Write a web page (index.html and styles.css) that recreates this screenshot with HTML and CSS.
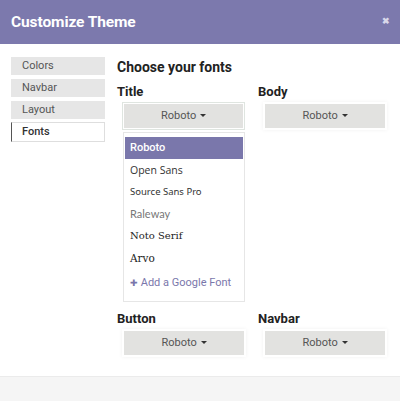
FILE: index.html
```html
<!DOCTYPE html>
<html>
<head>
<meta charset="utf-8">
<link rel="stylesheet" href="styles.css">
</head>
<body>
<div class="modal">
  <header class="head">
    <h1 class="head-title">Customize Theme</h1>
    <span class="close">&#10006;</span>
  </header>
  <main class="main">
    <nav class="side">
      <div class="side-item">Colors</div>
      <div class="side-item">Navbar</div>
      <div class="side-item">Layout</div>
      <div class="side-item side-active">Fonts</div>
    </nav>
    <section class="content">
      <h2 class="heading">Choose your fonts</h2>
      <div class="grid">
        <div class="col">
          <div class="label">Title</div>
          <div class="wrap wrap-focus"><div class="btn">Roboto <span class="caret"></span></div></div>
          <ul class="menu">
            <li class="mi mi-active">Roboto</li>
            <li class="mi f-open">Open Sans</li>
            <li class="mi f-source">Source Sans Pro</li>
            <li class="mi f-raleway">Raleway</li>
            <li class="mi f-noto">Noto Serif</li>
            <li class="mi f-arvo">Arvo</li>
            <li class="mi mi-add"><span class="plus">&#10010;</span> Add a Google Font</li>
          </ul>
        </div>
        <div class="col">
          <div class="label">Body</div>
          <div class="wrap"><div class="btn">Roboto <span class="caret"></span></div></div>
        </div>
        <div class="col">
          <div class="label">Button</div>
          <div class="wrap"><div class="btn">Roboto <span class="caret"></span></div></div>
        </div>
        <div class="col">
          <div class="label">Navbar</div>
          <div class="wrap"><div class="btn">Roboto <span class="caret"></span></div></div>
        </div>
      </div>
    </section>
  </main>
  <footer class="foot"></footer>
</div>
</body>
</html>
```
FILE: styles.css
```css
* { box-sizing: border-box; }
html, body { margin: 0; padding: 0; }
body {
  font-family: Roboto, "Liberation Sans", sans-serif;
  background: #fff;
  width: 400px;
  height: 401px;
  overflow: hidden;
}
.modal {
  display: flex;
  flex-direction: column;
  height: 401px;
}
.head {
  height: 44px;
  background: #7c79ad;
  display: flex;
  align-items: center;
  justify-content: space-between;
  padding: 0 11px;
  flex: none;
}
.head-title {
  margin: 0;
  color: #fff;
  font-size: 15.5px;
  font-weight: 700;
  letter-spacing: -0.1px;
}
.close {
  color: #d9d8ea;
  font-size: 9px;
  font-weight: 700;
  margin-top: -3px;
  margin-right: -1px;
}
.main {
  flex: 1;
  display: flex;
  padding: 13px 0 0 11px;
  gap: 12px;
}
.side {
  width: 94px;
  display: flex;
  flex-direction: column;
  gap: 4px;
  flex: none;
}
.side-item {
  height: 18px;
  background: #e6e6e6;
  color: #555;
  font-size: 11px;
  line-height: 18px;
  padding-left: 11px;
}
.side-active {
  height: 20px;
  margin-top: -1px;
  background: #fff;
  border: 1px solid #dedede;
  border-left-color: #555;
  color: #333;
  font-weight: 500;
  padding-left: 10px;
}
.content { flex: 1; }
.heading {
  margin: 2px 0 0;
  font-size: 14px;
  line-height: 16px;
  font-weight: 700;
  color: #222;
}
.grid {
  display: grid;
  grid-template-columns: 141px 141px;
  row-gap: 9px;
  margin-top: 9px;
}
.label {
  font-size: 13px;
  line-height: 15px;
  font-weight: 700;
  color: #222;
}
.wrap {
  margin: 3px 0 0 5px;
  width: 124px;
  padding: 2px;
  box-shadow: 0 0 4px rgba(0,0,0,0.06);
  background: #fff;
}
.wrap-focus {
  border: 1px solid #dfe5e0;
  padding: 1px;
  box-shadow: none;
  width: 123px;
}
.btn {
  height: 24px;
  background: #e2e2e0;
  color: #555;
  font-size: 11px;
  line-height: 24px;
  text-align: center;
}
.caret {
  display: inline-block;
  width: 0;
  height: 0;
  border-left: 3px solid transparent;
  border-right: 3px solid transparent;
  border-top: 3px solid #333;
  vertical-align: 2px;
  margin-left: 1px;
}
.menu {
  list-style: none;
  margin: 2px 0 0 6px;
  padding: 4px 0 6px;
  width: 122px;
  border: 1px solid #e6e6e6;
}
.mi {
  height: 22px;
  line-height: 22px;
  padding-left: 6px;
  font-size: 11px;
  color: #333;
  white-space: nowrap;
}
.mi-active {
  background: #7a77ab;
  color: #fff;
  font-weight: 500;
  margin: 0 1px;
  padding-left: 5px;
}
.f-open { font-family: "Open Sans", sans-serif; font-size: 10.5px; }
.f-source { font-family: "Noto Sans", sans-serif; font-size: 9.5px; }
.f-raleway { font-family: Lato, sans-serif; color: #777; font-size: 11px; }
.f-noto { font-family: "DejaVu Serif", serif; font-size: 10px; color: #222; font-weight: 400; }
.f-arvo { font-family: "DejaVu Serif", serif; font-size: 10.5px; color: #222; }
.mi-add {
  margin-top: 2px;
  height: 24px;
  line-height: 24px;
  color: #7a77ab;
  font-size: 11px;
}
.plus { font-size: 9px; }
.foot {
  height: 25px;
  flex: none;
  background: #f5f5f5;
  border-top: 1px solid #ebebeb;
}
```
